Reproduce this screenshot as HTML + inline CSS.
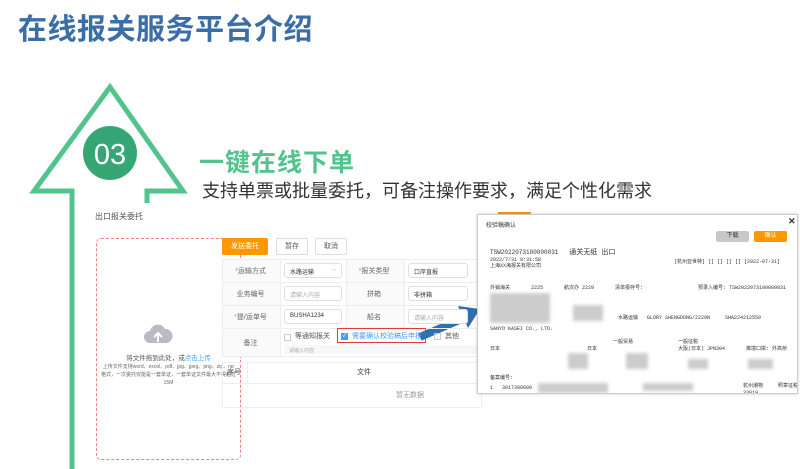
<!DOCTYPE html>
<html><head><meta charset="utf-8"><style>
*{margin:0;padding:0;box-sizing:border-box}
html,body{width:800px;height:469px;overflow:hidden}
body{background:#fff;position:relative;font-family:"Liberation Sans","Noto Sans CJK SC",sans-serif}
.a{position:absolute}
.t{font-size:9px;color:#555;white-space:nowrap}
.s{font-size:6px;color:#333;white-space:nowrap;font-family:"Liberation Mono","Noto Sans CJK SC",monospace;line-height:7px}
.inp{position:absolute;border:1px solid #dcdfe6;border-radius:3px;background:#fff;font-size:6px;color:#aaa;padding:3px 5px;height:15px;white-space:nowrap}
.lab{position:absolute;font-size:7px;color:#666;text-align:center}
.blur{position:absolute;background:#ccc;filter:blur(1.5px)}
</style></head><body>
<div class="a" style="left:18px;top:6px;font-size:29px;font-weight:bold;color:#3a6ea8;letter-spacing:0.5px">在线报关服务平台介绍</div>

<svg class="a" style="left:0;top:0" width="800" height="469">
<polyline points="72,469 72,191 34,191 110,87 183,191 147,191 147,203" fill="none" stroke="#52c38c" stroke-width="5"/>
<circle cx="110" cy="153" r="27" fill="#37a675"/>
<text x="110" y="164" font-size="29" fill="#fff" text-anchor="middle" font-family="Liberation Sans">03</text>
<line x1="420" y1="337" x2="464" y2="318" stroke="#2f6fb0" stroke-width="8"/>
<polygon points="458,306 480,309 468,328" fill="#2f6fb0"/>
</svg>

<div class="a" style="left:199px;top:143px;font-size:25px;font-weight:bold;color:#52c38c;letter-spacing:1px">一键在线下单</div>
<div class="a" style="left:202px;top:177px;font-size:18px;color:#333">支持单票或批量委托，可备注操作要求，满足个性化需求</div>

<div class="a t" style="left:95px;top:211px;font-size:8px">出口报关委托</div>

<div class="a" style="left:96px;top:238px;width:145px;height:222px;border:1px dashed #f08080;border-radius:5px">
 <svg class="a" style="left:46px;top:84px" width="30" height="22"><path d="M7 20a6 6 0 0 1 0-12a8 8 0 0 1 15-2a6 6 0 0 1 1 14z" fill="#b8bcc2"/><path d="M15 19v-9m-4 4l4-4l4 4" stroke="#fff" stroke-width="2" fill="none"/></svg>
 <div class="a" style="left:0;width:143px;top:113px;text-align:center;font-size:6.5px;color:#555">将文件拖到此处，或<span style="color:#409eff">点击上传</span></div>
 <div class="a" style="left:4px;width:135px;top:124px;text-align:center;font-size:5px;color:#666;line-height:8px">上传文件支持word、excel、pdf、jpg、jpeg、png、zip、rar格式，一次委托仅能是一套单证，一套单证文件最大不得超过15M</div>
</div>

<div class="a" style="left:222px;top:238px;width:46px;height:17px;background:#ff9800;border-radius:2px;color:#fff;font-size:7px;text-align:center;line-height:17px">发送委托</div>
<div class="a" style="left:276px;top:238px;width:32px;height:17px;border:1px solid #ddd;border-radius:2px;color:#555;font-size:7px;text-align:center;line-height:15px">暂存</div>
<div class="a" style="left:315px;top:238px;width:32px;height:17px;border:1px solid #ddd;border-radius:2px;color:#555;font-size:7px;text-align:center;line-height:15px">取消</div>

<div class="a" style="left:222px;top:259px;width:260px;height:98px;border:1px solid #eee">
 <div class="a" style="left:0;top:0;width:57px;height:96px;background:#fafafa"></div>
 <div class="a" style="left:123px;top:0;width:58px;height:68px;background:#fafafa"></div>
 <div class="a" style="left:0;top:22px;width:260px;height:1px;background:#eee"></div>
 <div class="a" style="left:0;top:45px;width:260px;height:1px;background:#eee"></div>
 <div class="a" style="left:0;top:68px;width:260px;height:1px;background:#eee"></div>
 <div class="a" style="left:57px;top:0;width:1px;height:96px;background:#eee"></div>
 <div class="a" style="left:123px;top:0;width:1px;height:68px;background:#eee"></div>
 <div class="a" style="left:181px;top:0;width:1px;height:68px;background:#eee"></div>
</div>
<div class="lab" style="left:222px;top:266px;width:57px"><span style="color:#f56c6c">*</span>运输方式</div>
<div class="lab" style="left:222px;top:289px;width:57px">业务编号</div>
<div class="lab" style="left:222px;top:312px;width:57px"><span style="color:#f56c6c">*</span>提/运单号</div>
<div class="lab" style="left:222px;top:338px;width:57px">备注</div>
<div class="lab" style="left:345px;top:266px;width:58px"><span style="color:#f56c6c">*</span>报关类型</div>
<div class="lab" style="left:345px;top:289px;width:58px">拼箱</div>
<div class="lab" style="left:345px;top:312px;width:58px">船名</div>
<div class="inp" style="left:284px;top:263px;width:58px;color:#333">水路运输 <span style="float:right;color:#aaa">⌵</span></div>
<div class="inp" style="left:284px;top:286px;width:58px">请输入内容</div>
<div class="inp" style="left:284px;top:309px;width:58px;color:#333">BUSHA1234</div>
<div class="inp" style="left:408px;top:263px;width:60px;color:#333">口岸直报</div>
<div class="inp" style="left:408px;top:286px;width:60px;color:#333">非拼箱</div>
<div class="inp" style="left:408px;top:309px;width:60px">请输入内容</div>
<div class="a" style="left:284px;top:334px;width:7px;height:7px;border:1px solid #ccc"></div>
<div class="a t" style="left:295px;top:331px;font-size:7px;color:#555">等通知报关</div>
<div class="a" style="left:337px;top:328px;width:89px;height:15px;border:1.5px solid #e53935"></div>
<div class="a" style="left:341px;top:333px;width:7px;height:7px;background:#409eff;color:#fff;font-size:6px;line-height:7px;text-align:center">✓</div>
<div class="a t" style="left:352px;top:331px;font-size:7px;color:#409eff">需要确认校验稿后申报</div>
<div class="a" style="left:434px;top:333px;width:7px;height:7px;border:1px solid #ccc"></div>
<div class="a t" style="left:445px;top:331px;font-size:7px;color:#555">其他</div>
<div class="a" style="left:284px;top:345px;width:196px;height:9px;background:#f5f7fa;font-size:5px;color:#aaa;padding:2px 5px">请输入内容</div>

<div class="a" style="left:222px;top:362px;width:260px;height:46px;border:1px solid #eee">
 <div class="a" style="left:0;top:20px;width:260px;height:1px;background:#eee"></div>
 <div class="a" style="left:24px;top:0;width:1px;height:20px;background:#eee"></div>
</div>
<div class="a t" style="left:227px;top:367px;font-size:7px">序号</div>
<div class="a t" style="left:357px;top:367px;font-size:7px;color:#333">文件</div>
<div class="a t" style="left:396px;top:390px;font-size:7px;color:#999">暂无数据</div>
<div class="a" style="left:498px;top:212px;width:33px;height:3px;background:#ff9800"></div>

<div class="a" style="left:477px;top:214px;width:321px;height:180px;background:#fff;border:1px solid #ccc;box-shadow:0 0 3px rgba(0,0,0,.2);overflow:hidden">
 <div class="a t" style="left:8px;top:5px;font-size:6px;color:#333">校验稿确认</div>
 <div class="a" style="left:310px;top:1px;font-size:9px;font-weight:bold;color:#333">✕</div>
 <div class="a" style="left:238px;top:16px;width:33px;height:11px;background:#c8c8c8;border-radius:2px;font-size:6px;text-align:center;line-height:11px;color:#333">下载</div>
 <div class="a" style="left:276px;top:16px;width:33px;height:11px;background:#ff9800;border-radius:2px;font-size:6px;text-align:center;line-height:11px;color:#fff">确认</div>
 <div class="a s" style="left:12px;top:34px">TSW2022073100000031 &nbsp; <span style="font-size:7px">通关无纸 出口</span></div>
 <div class="a s" style="left:12px;top:42px;font-size:5px">2022/7/31 9:31:58</div>
 <div class="a s" style="left:12px;top:48px;font-size:5px">上海XX海报关有限公司</div>
 <div class="a s" style="left:196px;top:44px;font-size:5px">[杭州亚世特] [] [] [] [] [2022-07-31]</div>
 <div class="a s" style="left:12px;top:70px;font-size:5px">外销海关 &nbsp; &nbsp; &nbsp; 2225 &nbsp; &nbsp; &nbsp; 航次办 2229 &nbsp; &nbsp; &nbsp; 清单报存号:</div>
 <div class="a s" style="left:220px;top:70px;font-size:5px">预录入编号: TSW2022073100000031</div>
 <div class="blur" style="left:12px;top:78px;width:60px;height:30px"></div>
 <div class="blur" style="left:95px;top:90px;width:30px;height:16px"></div>
 <div class="a s" style="left:140px;top:100px;font-size:5px">水路运输 &nbsp; GLORY SHENGDONG/2229N &nbsp; &nbsp; SHA224212550</div>
 <div class="a s" style="left:12px;top:111px;font-size:5px">SANYO KASEI CO., LTD.</div>
 <div class="a s" style="left:135px;top:124px;font-size:5px">一般贸易 &nbsp; &nbsp; &nbsp; &nbsp; &nbsp; &nbsp; &nbsp; 一般征税</div>
 <div class="a s" style="left:12px;top:131px;font-size:5px">日本 &nbsp; &nbsp; &nbsp; &nbsp; &nbsp; &nbsp; &nbsp; &nbsp; &nbsp; &nbsp; &nbsp; &nbsp; &nbsp; &nbsp; 日本 &nbsp; &nbsp; &nbsp; &nbsp; &nbsp; &nbsp; &nbsp; &nbsp; &nbsp; &nbsp; &nbsp; &nbsp; &nbsp; 大阪(日本) JPN304 &nbsp; &nbsp; &nbsp; 离境口岸: 外高桥</div>
 <div class="blur" style="left:90px;top:138px;width:20px;height:16px"></div>
 <div class="blur" style="left:148px;top:138px;width:22px;height:16px"></div>
 <div class="blur" style="left:210px;top:144px;width:20px;height:10px"></div>
 <div class="blur" style="left:270px;top:144px;width:25px;height:10px"></div>
 <div class="a s" style="left:12px;top:160px;font-size:5px">备案编号:</div>
 <div class="a s" style="left:12px;top:170px;font-size:5px">1 &nbsp; 3917390000</div>
 <div class="a s" style="left:265px;top:168px;font-size:5px">杭州潮物 &nbsp; &nbsp; 照章征税<br>33019</div>
 <div class="blur" style="left:60px;top:168px;width:70px;height:10px"></div>
 <div class="blur" style="left:165px;top:168px;width:50px;height:8px"></div>
</div>
</body></html>
